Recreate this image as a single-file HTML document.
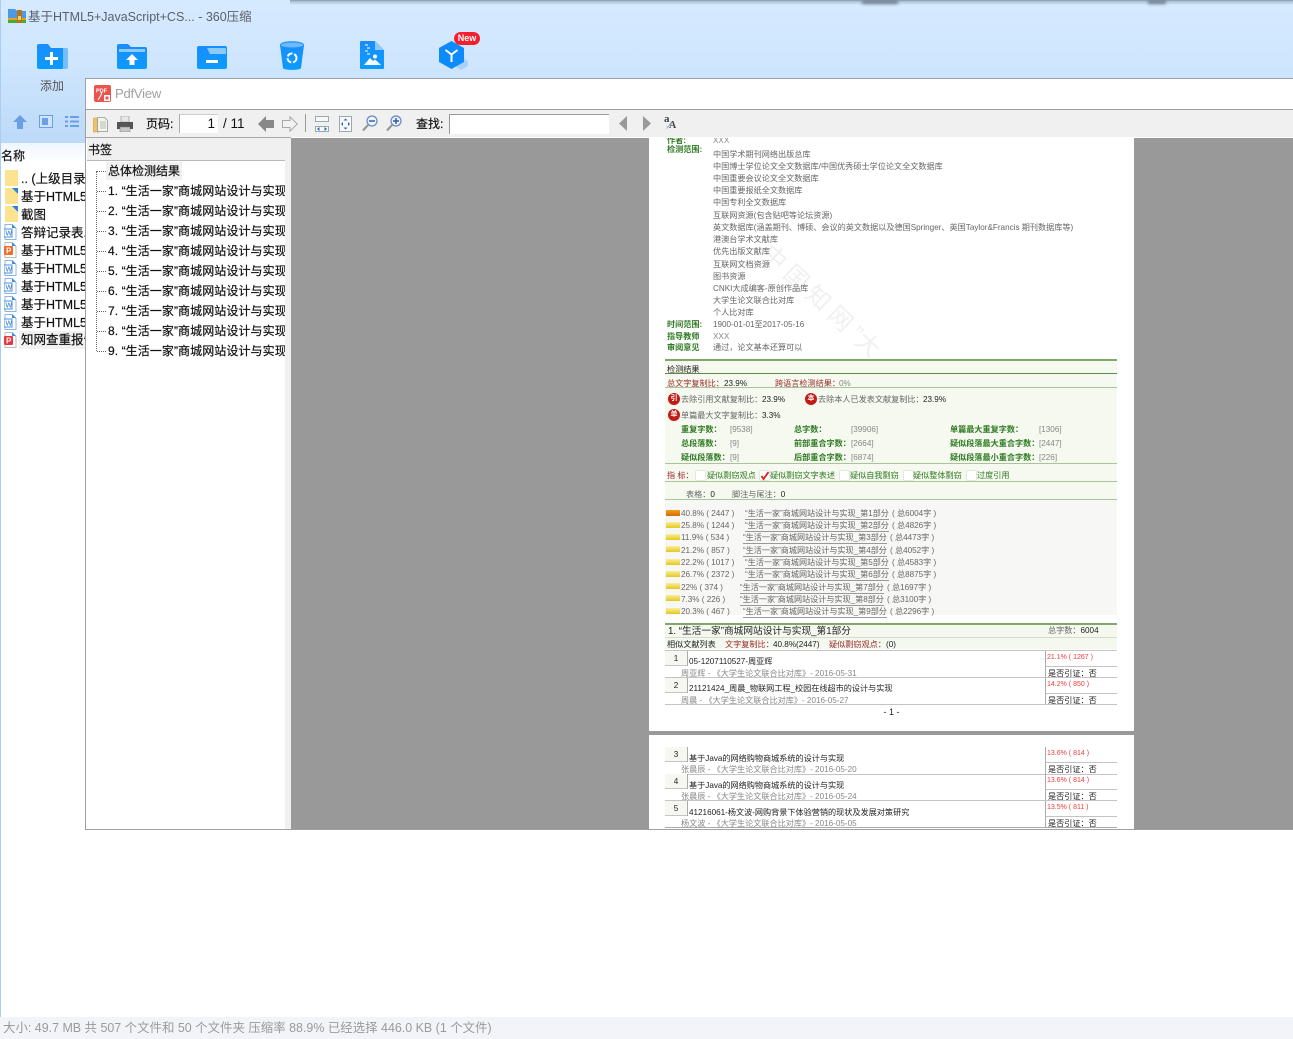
<!DOCTYPE html>
<html lang="zh"><head><meta charset="utf-8"><title>360压缩</title>
<style>
*{box-sizing:border-box}
html,body{margin:0;padding:0;width:1293px;height:1039px;overflow:hidden;background:#fff;font-family:"Liberation Sans","Noto Sans CJK SC",sans-serif}
.a{position:absolute}
.l{position:absolute;white-space:nowrap;font-size:12px;line-height:16px;color:#111;height:16px}
.s{-webkit-text-stroke:.2px}
.s .l{-webkit-text-stroke:.2px}
#page .t{position:absolute;white-space:nowrap;font-size:8.15px;line-height:10px;height:10px;color:#666;margin-top:1px}
#page .g{color:#2f7a22;font-weight:bold}
#page .r{color:#9a2a2a}
#page .k{color:#222}
#page .v{color:#888}
#page .rr{color:#f03a3a;font-size:7px}
#page .u{border-bottom:1px solid #999;font-size:8.1px}
.hl{position:absolute;left:16px;width:452px;height:1px}
.bar{position:absolute;left:17px;width:14px;height:6px;background:linear-gradient(#f8ee9a,#e5c81e)}
.cb{position:absolute;width:11px;height:11px;background:#fff;border-radius:2px;border:1px solid #e4e8df}
.circ{position:absolute;width:12px;height:12px;border-radius:50%;background:#c21a14;color:#fff;font-size:7px;line-height:12px;text-align:center;font-weight:bold}
</style></head><body>

<!-- main window background -->
<div class="a" style="left:0;top:0;width:1293px;height:143px;background:linear-gradient(#d6eaff 0,#cfe6fe 60px,#c6e0fb 100px,#bcd9f8 143px)"></div>
<div class="a" style="left:290px;top:0;width:1003px;height:1px;background:#93a5b8"></div>
<div class="a" style="left:290px;top:1px;width:1003px;height:4px;background:linear-gradient(#a9bdd2,#d6eaff)"></div>
<div class="a" style="left:862px;top:0;width:36px;height:4px;background:#6f7f90;filter:blur(1.500px)"></div>
<div class="a" style="left:1148px;top:0;width:18px;height:4px;background:#6f7f90;filter:blur(1.500px)"></div>
<div class="a" style="left:0;top:0;width:1px;height:1017px;background:#a9cdf3"></div>

<svg class="a" style="left:8px;top:8px" width="18" height="16" viewBox="0 0 18 16"><path d="M0 1h7l2 2h9v10H0z" fill="#4a9ae8"/><rect x="0" y="10" width="18" height="2" fill="#e8a020"/><rect x="0" y="12" width="18" height="3" fill="#48a838"/><rect x="9" y="2" width="5" height="13" fill="#b8741c"/><rect x="10" y="8" width="3" height="4" fill="#f4d060"/></svg>
<div class="l" style="left:28px;top:9px;color:#5a6068;font-size:12.5px">基于HTML5+JavaScript+CS... - 360压缩</div>

<!-- toolbar icons -->
<svg class="a" style="left:37px;top:44px" width="31" height="25" viewBox="0 0 31 25"><defs><linearGradient id="b1" x1="0" y1="0" x2="0" y2="1"><stop offset="0" stop-color="#1a8dfd"/><stop offset="1" stop-color="#0a9bff"/></linearGradient></defs><path d="M26 4h3.500a1.500 1.500 0 0 1 1.500 1.500V23a2 2 0 0 1-2 2H24z" fill="#76bdfb"/><path d="M0 2a2 2 0 0 1 2-2h9l3 4h12v19a2 2 0 0 1-2 2H2a2 2 0 0 1-2-2z" fill="url(#b1)"/><path d="M13 10h3v5h5v3h-5v5h-3v-5H8v-3h5z" transform="translate(0,-2)" fill="#fff"/></svg>
<svg class="a" style="left:117px;top:44px" width="30" height="25" viewBox="0 0 30 25"><path d="M0 2a2 2 0 0 1 2-2h9l3 3h14a2 2 0 0 1 2 2v18a2 2 0 0 1-2 2H2a2 2 0 0 1-2-2z" fill="url(#b1)"/><rect x="2" y="5" width="26" height="3" fill="#8ccafc"/><path d="M15 10l6 6h-3.500v5h-5v-5H9z" fill="#fff"/></svg>
<svg class="a" style="left:197px;top:46px" width="30" height="23" viewBox="0 0 30 23"><path d="M0 2a2 2 0 0 1 2-2h26a2 2 0 0 1 2 2v19a2 2 0 0 1-2 2H2a2 2 0 0 1-2-2z" fill="url(#b1)"/><path d="M10 2h18a1 1 0 0 1 1 1v5H13z" fill="#8ccafc"/><rect x="9" y="14" width="12" height="3" fill="#fff"/></svg>
<svg class="a" style="left:280px;top:41px" width="24" height="29" viewBox="0 0 24 29"><path d="M0 4c0-5 24-5 24 0l-3 23c-.5 2.500-17.500 2.500-18 0z" fill="url(#b1)"/><ellipse cx="12" cy="4" rx="11" ry="2.500" fill="#6dbbfb"/><circle cx="12" cy="17" r="4.500" fill="none" stroke="#fff" stroke-width="2" stroke-dasharray="6 1.800"/></svg>
<svg class="a" style="left:360px;top:41px" width="24" height="28" viewBox="0 0 24 28"><path d="M0 1a1 1 0 0 1 1-1h14l9 9v18a1 1 0 0 1-1 1H1a1 1 0 0 1-1-1z" fill="url(#b1)"/><path d="M15 0l9 9h-9z" fill="#8ccafc"/><path d="M5 3h3v2H5zM7 6h3v2H7zM5 9h3v2H5zM7 12h3v2H7z" fill="#8ccafc"/><path d="M4 24l6-7 3 3 2-1.500 6 5.500z" fill="#fff"/><circle cx="15" cy="15.500" r="2" fill="#fff"/></svg>
<svg class="a" style="left:439px;top:41px" width="30" height="29" viewBox="0 0 30 29"><path d="M22 16l7 4v5l-7 4-5-3 5-4z" fill="#a8d0f8"/><path d="M12.500 0L25 7v14l-12.500 7L0 21V7z" fill="#0d8bfd"/><path d="M6.500 9l6 4.500 6-4.500M12.500 13.500V21" fill="none" stroke="#fff" stroke-width="2"/></svg>
<div class="a" style="left:454px;top:32px;width:26px;height:13px;border-radius:7px;background:#f4202e;color:#fff;font-size:9px;line-height:13px;text-align:center;font-weight:bold">New</div>
<div class="l" style="left:40px;top:78px;color:#555">添加</div>

<svg class="a" style="left:13px;top:115px" width="14" height="14" viewBox="0 0 14 14"><path d="M7 0l7 7H10v7H4V7H0z" fill="#6a9fe8"/></svg>
<svg class="a" style="left:39px;top:115px" width="14" height="13" viewBox="0 0 14 13"><rect x=".5" y=".5" width="13" height="12" fill="#cfe3fa" stroke="#6a9fe8"/><rect x="3" y="3" width="6" height="7" fill="#6a9fe8"/></svg>
<svg class="a" style="left:65px;top:115px" width="14" height="13" viewBox="0 0 14 13"><path d="M0 1h3v2H0zM5 1h9v2H5zM0 5.500h3v2H0zM5 5.500h9v2H5zM0 10h3v2H0zM5 10h9v2H5z" fill="#6a9fe8"/></svg>

<!-- file list -->
<div class="a" style="left:1px;top:143px;width:84px;height:20px;background:linear-gradient(#eef6fe,#fff)"></div>
<div class="a" style="left:1px;top:163px;width:84px;height:854px;background:#fff"></div>
<div class="l s" style="left:1px;top:148px">名称</div>
<div class="a" style="left:19px;top:331px;width:66px;height:18px;background:#f1f1f1"></div>

<svg class="a" style="left:5px;top:170px" width="13" height="16"><rect width="13" height="16" fill="#fbe38f"/></svg>
<svg class="a" style="left:5px;top:188px" width="13" height="16"><rect width="13" height="16" fill="#fbe38f"/><path d="M7 0h6v6z" fill="#2a86d8"/></svg>
<svg class="a" style="left:5px;top:206px" width="13" height="16"><rect width="13" height="16" fill="#fbe38f"/><path d="M7 0h6v6z" fill="#2a86d8"/></svg>
<svg class="a" style="left:4px;top:224px" width="13" height="16"><path d="M1 .5h7l4 4v11H1z" fill="#fff" stroke="#8cb4e8"/><path d="M8 0l4 4H8z" fill="#3a8ee0"/><rect x="0" y="5" width="8" height="8" fill="#fff" stroke="#4a8fdc"/><text x="1.500" y="11.500" font-size="7" fill="#2a70c8" font-family="Liberation Sans">W</text></svg>
<svg class="a" style="left:4px;top:242px" width="13" height="16"><path d="M1 .5h7l4 4v11H1z" fill="#fff" stroke="#bbb"/><path d="M8 0l4 4H8z" fill="#3a8ee0"/><rect x="0" y="4" width="9" height="9" rx="1" fill="#f06a2a"/><text x="2" y="11.500" font-size="8" font-weight="bold" fill="#fff" font-family="Liberation Sans">P</text></svg>
<svg class="a" style="left:4px;top:260px" width="13" height="16"><path d="M1 .5h7l4 4v11H1z" fill="#fff" stroke="#8cb4e8"/><path d="M8 0l4 4H8z" fill="#3a8ee0"/><rect x="0" y="5" width="8" height="8" fill="#fff" stroke="#4a8fdc"/><text x="1.500" y="11.500" font-size="7" fill="#2a70c8" font-family="Liberation Sans">W</text></svg>
<svg class="a" style="left:4px;top:278px" width="13" height="16"><path d="M1 .5h7l4 4v11H1z" fill="#fff" stroke="#8cb4e8"/><path d="M8 0l4 4H8z" fill="#3a8ee0"/><rect x="0" y="5" width="8" height="8" fill="#fff" stroke="#4a8fdc"/><text x="1.500" y="11.500" font-size="7" fill="#2a70c8" font-family="Liberation Sans">W</text></svg>
<svg class="a" style="left:4px;top:296px" width="13" height="16"><path d="M1 .5h7l4 4v11H1z" fill="#fff" stroke="#8cb4e8"/><path d="M8 0l4 4H8z" fill="#3a8ee0"/><rect x="0" y="5" width="8" height="8" fill="#fff" stroke="#4a8fdc"/><text x="1.500" y="11.500" font-size="7" fill="#2a70c8" font-family="Liberation Sans">W</text></svg>
<svg class="a" style="left:4px;top:314px" width="13" height="16"><path d="M1 .5h7l4 4v11H1z" fill="#fff" stroke="#8cb4e8"/><path d="M8 0l4 4H8z" fill="#3a8ee0"/><rect x="0" y="5" width="8" height="8" fill="#fff" stroke="#4a8fdc"/><text x="1.500" y="11.500" font-size="7" fill="#2a70c8" font-family="Liberation Sans">W</text></svg>
<svg class="a" style="left:4px;top:332px" width="13" height="16"><path d="M1 .5h7l4 4v11H1z" fill="#fff" stroke="#bbb"/><path d="M8 0l4 4H8z" fill="#3a8ee0"/><rect x="0" y="4" width="9" height="9" rx="1" fill="#e8383f"/><text x="2" y="11.500" font-size="8" font-weight="bold" fill="#fff" font-family="Liberation Sans">P</text></svg>

<div class="a s" style="left:21px;top:171px;width:64px;height:180px;overflow:hidden">
<div class="l" style="left:0;top:0;font-size:12.500px">.. (上级目录)</div>
<div class="l" style="left:0;top:18px;font-size:12.500px">基于HTML5+JavaScript</div>
<div class="l" style="left:0;top:36px;font-size:12.500px">截图</div>
<div class="l" style="left:0;top:54px;font-size:12.500px">答辩记录表.doc</div>
<div class="l" style="left:0;top:72px;font-size:12.500px">基于HTML5+JavaScript</div>
<div class="l" style="left:0;top:90px;font-size:12.500px">基于HTML5+JavaScript</div>
<div class="l" style="left:0;top:108px;font-size:12.500px">基于HTML5+JavaScript</div>
<div class="l" style="left:0;top:126px;font-size:12.500px">基于HTML5+JavaScript</div>
<div class="l" style="left:0;top:144px;font-size:12.500px">基于HTML5+JavaScript</div>
<div class="l" style="left:0;top:161px;font-size:12.500px">知网查重报告.pdf</div>
</div>

<!-- PdfView window -->
<div class="a" style="left:85px;top:78px;width:1208px;height:752px;background:#fff;border:1px solid #a0a0a0;border-right:0"></div>
<svg class="a" style="left:94px;top:85px" width="17" height="17" viewBox="0 0 17 17"><rect width="17" height="17" rx="2" fill="#e9554e"/><text x="2" y="7.500" font-size="5.500" fill="#fff" font-weight="bold" font-family="Liberation Sans">PDF</text><path d="M4 15l3-5 1-3" stroke="#fff" fill="none"/><rect x="10" y="10" width="6" height="6" fill="#fff"/><rect x="11.500" y="11.500" width="3" height="3" fill="#e9554e"/></svg>
<div class="l" style="left:115px;top:86px;font-size:13px;color:#a0a0a0;letter-spacing:-.2px">PdfView</div>
<div class="a" style="left:86px;top:109px;width:1207px;height:1px;background:#a0a0a0"></div>
<div class="a" style="left:86px;top:110px;width:1207px;height:27px;background:#f0f0f0"></div>
<div class="a" style="left:86px;top:137px;width:205px;height:1px;background:#a8a8a8"></div>

<!-- pdf toolbar -->
<svg class="a" style="left:93px;top:116px" width="15" height="17" viewBox="0 0 15 17"><path d="M0 2h5l1 1v13H0z" fill="#eec26a" stroke="#c89a3c" stroke-width=".6"/><path d="M4.500 1.500h7l3 3v11h-10z" fill="#f4f4ee" stroke="#8a9a8a" stroke-width=".8"/><path d="M7 6h6M7 8h6M7 10h6M7 12h6" stroke="#a0aca0" stroke-width=".8"/></svg>
<svg class="a" style="left:117px;top:116px" width="16" height="16" viewBox="0 0 16 16"><rect x="4" y="0" width="8" height="6" fill="#e8e8e8" stroke="#999" stroke-width=".7"/><rect x="0" y="6" width="16" height="7" fill="#555"/><rect x="3" y="11" width="10" height="5" fill="#c8c8c8" stroke="#777" stroke-width=".5"/></svg>
<div class="l s" style="left:146px;top:116px">页码:</div>
<div class="a" style="left:179px;top:114px;width:39px;height:19px;background:#fff;border-left:1px solid #aaa;border-top:1px solid #ccc"></div>
<div class="l" style="left:179px;top:116px;width:36px;text-align:right;font-size:13.500px">1</div>
<div class="l" style="left:223px;top:116px;font-size:13.500px">/ 11</div>
<svg class="a" style="left:258px;top:116px" width="16" height="16" viewBox="0 0 16 16"><path d="M8 0v4h8v8H8v4L0 8z" fill="#888"/></svg>
<svg class="a" style="left:282px;top:116px" width="16" height="16" viewBox="0 0 16 16"><path d="M8 .8v3.700H.5v7H8v3.700L15.200 8z" fill="#f2f2f2" stroke="#a8a8a8"/></svg>
<div class="a" style="left:305px;top:114px;width:1px;height:18px;background:#9a9a9a"></div>
<svg class="a" style="left:315px;top:116px" width="14" height="16" viewBox="0 0 14 16"><rect x=".5" y=".5" width="13" height="5" fill="#f8f8f8" stroke="#9aa"/><rect x=".5" y="10.500" width="13" height="5" fill="#f8f8f8" stroke="#9aa"/><path d="M2 13l2.500-2v4zM12 13l-2.500-2v4z" fill="#2a66c8"/></svg>
<svg class="a" style="left:339px;top:116px" width="13" height="16" viewBox="0 0 13 16"><rect x=".5" y=".5" width="12" height="15" fill="#f8f8f8" stroke="#9aa"/><path d="M6.500 2.500l2 2h-4zM6.500 13.500l2-2h-4zM2 8l2-2v4zM11 8L9 6v4z" fill="#2a66c8"/></svg>
<svg class="a" style="left:362px;top:115px" width="16" height="17" viewBox="0 0 16 17"><path d="M6 10l-5 5.500" stroke="#999" stroke-width="2.200"/><circle cx="10" cy="6" r="5" fill="#eaf2fc" stroke="#6a88b8" stroke-width="1.200"/><path d="M7 6h6" stroke="#2a56a8" stroke-width="1.400"/></svg>
<svg class="a" style="left:386px;top:115px" width="16" height="17" viewBox="0 0 16 17"><path d="M6 10l-5 5.500" stroke="#999" stroke-width="2.200"/><circle cx="10" cy="6" r="5" fill="#eaf2fc" stroke="#6a88b8" stroke-width="1.200"/><path d="M7 6h6M10 3v6" stroke="#2a56a8" stroke-width="1.400"/></svg>
<div class="l s" style="left:416px;top:116px">查找:</div>
<div class="a" style="left:449px;top:114px;width:160px;height:20px;background:#fff;border-left:1px solid #999;border-top:1px solid #999"></div>
<svg class="a" style="left:619px;top:116px" width="8" height="15"><path d="M8 0v15L0 7.500z" fill="#999"/></svg>
<svg class="a" style="left:643px;top:116px" width="8" height="15"><path d="M0 0v15l8-7.500z" fill="#999"/></svg>
<div class="a" style="left:664px;top:113px;font-family:'Liberation Serif',serif;font-size:11px;font-weight:bold;color:#444;line-height:12px">a</div>
<div class="a" style="left:669px;top:120px;font-family:'Liberation Serif',serif;font-size:10px;font-weight:bold;color:#444;line-height:12px">A</div>
<div class="a" style="left:665px;top:125px;width:8px;height:1px;background:#8aa8c8;transform:rotate(-50deg)"></div>

<!-- bookmarks -->
<div class="a" style="left:87px;top:138px;width:204px;height:691px;background:#f0f0f0"></div>
<div class="l s" style="left:88px;top:142px">书签</div>
<div class="a" style="left:87px;top:160px;width:198px;height:1px;background:#b8b8b8"></div>
<div class="a" style="left:87px;top:161px;width:198px;height:668px;background:#fff"></div>
<div class="a" style="left:106px;top:162px;width:76px;height:18px;background:#f0f0f0"></div>
<div class="a" style="left:96px;top:171px;width:1px;height:180px;border-left:1px dotted #666"></div>
<div class="a" style="left:97px;top:171px;width:9px;border-top:1px dotted #666"></div>
<div class="a" style="left:97px;top:191px;width:9px;border-top:1px dotted #666"></div>
<div class="a" style="left:97px;top:211px;width:9px;border-top:1px dotted #666"></div>
<div class="a" style="left:97px;top:231px;width:9px;border-top:1px dotted #666"></div>
<div class="a" style="left:97px;top:251px;width:9px;border-top:1px dotted #666"></div>
<div class="a" style="left:97px;top:271px;width:9px;border-top:1px dotted #666"></div>
<div class="a" style="left:97px;top:291px;width:9px;border-top:1px dotted #666"></div>
<div class="a" style="left:97px;top:311px;width:9px;border-top:1px dotted #666"></div>
<div class="a" style="left:97px;top:331px;width:9px;border-top:1px dotted #666"></div>
<div class="a" style="left:97px;top:351px;width:9px;border-top:1px dotted #666"></div>
<div class="a s" style="left:108px;top:162px;width:177px;height:200px;overflow:hidden">
<div class="l" style="left:0;top:1px">总体检测结果</div>
<div class="l" style="left:0;top:21px;letter-spacing:.08px">1. “生活一家”商城网站设计与实现_第1部分</div>
<div class="l" style="left:0;top:41px;letter-spacing:.08px">2. “生活一家”商城网站设计与实现_第2部分</div>
<div class="l" style="left:0;top:61px;letter-spacing:.08px">3. “生活一家”商城网站设计与实现_第3部分</div>
<div class="l" style="left:0;top:81px;letter-spacing:.08px">4. “生活一家”商城网站设计与实现_第4部分</div>
<div class="l" style="left:0;top:101px;letter-spacing:.08px">5. “生活一家”商城网站设计与实现_第5部分</div>
<div class="l" style="left:0;top:121px;letter-spacing:.08px">6. “生活一家”商城网站设计与实现_第6部分</div>
<div class="l" style="left:0;top:141px;letter-spacing:.08px">7. “生活一家”商城网站设计与实现_第7部分</div>
<div class="l" style="left:0;top:161px;letter-spacing:.08px">8. “生活一家”商城网站设计与实现_第8部分</div>
<div class="l" style="left:0;top:181px;letter-spacing:.08px">9. “生活一家”商城网站设计与实现_第9部分</div>
</div>

<!-- viewer -->
<div class="a" style="left:291px;top:138px;width:1002px;height:691px;background:#999"></div>
<div id="page" class="a" style="left:649px;top:138px;width:485px;height:691px;overflow:hidden;background:#fff;filter:blur(.3px)">
<div class="a" style="left:0;top:593px;width:485px;height:4px;background:#999"></div>

<div class="a" style="left:16px;top:222px;width:452px;height:140px;background:#f5f9f0"></div>
<div class="a" style="left:16px;top:362px;width:452px;height:115px;background:#f7f8f5"></div>
<div class="a" style="left:16px;top:486px;width:452px;height:25px;background:#f4f8ef"></div>

<div class="a" style="font-size:24px;line-height:30px;color:#f0f0f0;white-space:nowrap;letter-spacing:6px;transform:rotate(43deg);transform-origin:0 0;left:126px;top:101px">中国知网<span style="letter-spacing:0">”</span>大</div>

<div class="t g" style="left:18px;top:-3px">作者:</div><div class="t v" style="left:64px;top:-3px">XXX</div>
<div class="t g" style="left:18px;top:6px">检测范围:</div>
<div class="t" style="left:64px;top:11px">中国学术期刊网络出版总库</div>
<div class="t" style="left:64px;top:23px">中国博士学位论文全文数据库/中国优秀硕士学位论文全文数据库</div>
<div class="t" style="left:64px;top:35px">中国重要会议论文全文数据库</div>
<div class="t" style="left:64px;top:47px">中国重要报纸全文数据库</div>
<div class="t" style="left:64px;top:59px">中国专利全文数据库</div>
<div class="t" style="left:64px;top:72px">互联网资源(包含贴吧等论坛资源)</div>
<div class="t" style="left:64px;top:84px">英文数据库(涵盖期刊、博硕、会议的英文数据以及德国Springer、英国Taylor&amp;Francis 期刊数据库等)</div>
<div class="t" style="left:64px;top:96px">港澳台学术文献库</div>
<div class="t" style="left:64px;top:108px">优先出版文献库</div>
<div class="t" style="left:64px;top:121px">互联网文档资源</div>
<div class="t" style="left:64px;top:133px">图书资源</div>
<div class="t" style="left:64px;top:145px">CNKI大成编客-原创作品库</div>
<div class="t" style="left:64px;top:157px">大学生论文联合比对库</div>
<div class="t" style="left:64px;top:169px">个人比对库</div>
<div class="t g" style="left:18px;top:181px">时间范围:</div><div class="t" style="left:64px;top:181px">1900-01-01至2017-05-16</div>
<div class="t g" style="left:18px;top:193px">指导教师</div><div class="t v" style="left:64px;top:193px">XXX</div>
<div class="t g" style="left:18px;top:204px">审阅意见</div><div class="t" style="left:64px;top:204px">通过，论文基本还算可以</div>

<div class="hl" style="top:221px;height:2px;background:#7fa86a"></div>
<div class="t k" style="left:18px;top:226px">检测结果</div>
<div class="hl" style="top:235px;background:#5d8a4a"></div>
<div class="t r" style="left:18px;top:240px">总文字复制比：</div><div class="t k" style="left:75px;top:240px">23.9%</div>
<div class="t r" style="left:126px;top:240px">跨语言检测结果：</div><div class="t v" style="left:190px;top:240px">0%</div>
<div class="hl" style="top:249px;background:#a8c498"></div>

<div class="circ" style="left:19px;top:255px">引</div><div class="t" style="left:32px;top:256px">去除引用文献复制比：</div><div class="t k" style="left:113px;top:256px">23.9%</div>
<div class="circ" style="left:156px;top:255px">本</div><div class="t" style="left:169px;top:256px">去除本人已发表文献复制比：</div><div class="t k" style="left:274px;top:256px">23.9%</div>
<div class="circ" style="left:19px;top:271px">单</div><div class="t" style="left:32px;top:272px">单篇最大文字复制比：</div><div class="t k" style="left:113px;top:272px">3.3%</div>

<div class="t g" style="left:32px;top:286px">重复字数：</div><div class="t v" style="left:81px;top:286px">[9538]</div>
<div class="t g" style="left:145px;top:286px">总字数：</div><div class="t v" style="left:202px;top:286px">[39906]</div>
<div class="t g" style="left:301px;top:286px">单篇最大重复字数：</div><div class="t v" style="left:390px;top:286px">[1306]</div>
<div class="t g" style="left:32px;top:300px">总段落数：</div><div class="t v" style="left:81px;top:300px">[9]</div>
<div class="t g" style="left:145px;top:300px">前部重合字数：</div><div class="t v" style="left:202px;top:300px">[2664]</div>
<div class="t g" style="left:301px;top:300px">疑似段落最大重合字数：</div><div class="t v" style="left:390px;top:300px">[2447]</div>
<div class="t g" style="left:32px;top:314px">疑似段落数：</div><div class="t v" style="left:81px;top:314px">[9]</div>
<div class="t g" style="left:145px;top:314px">后部重合字数：</div><div class="t v" style="left:202px;top:314px">[6874]</div>
<div class="t g" style="left:301px;top:314px">疑似段落最小重合字数：</div><div class="t v" style="left:390px;top:314px">[226]</div>
<div class="hl" style="top:325px;background:#a8c498"></div>

<div class="t r" style="left:18px;top:332px">指 标：</div>
<div class="cb" style="left:46px;top:332px"></div><div class="t g" style="left:58px;top:332px;font-weight:normal">疑似剽窃观点</div>
<div class="cb" style="left:110px;top:332px"></div><svg class="a" style="left:111px;top:333px" width="10" height="10" viewBox="0 0 10 10"><path d="M1.500 5l2 3 5-7" fill="none" stroke="#e02020" stroke-width="1.800"/></svg><div class="t g" style="left:121px;top:332px;font-weight:normal">疑似剽窃文字表述</div>
<div class="cb" style="left:190px;top:332px"></div><div class="t g" style="left:201px;top:332px;font-weight:normal">疑似自我剽窃</div>
<div class="cb" style="left:254px;top:332px"></div><div class="t g" style="left:264px;top:332px;font-weight:normal">疑似整体剽窃</div>
<div class="cb" style="left:317px;top:332px"></div><div class="t g" style="left:328px;top:332px;font-weight:normal">过度引用</div>
<div class="hl" style="top:343px;background:#a8c498"></div>
<div class="t" style="left:37px;top:351px">表格：<span style="color:#222">0</span></div>
<div class="t" style="left:83px;top:351px">脚注与尾注：<span style="color:#222">0</span></div>
<div class="hl" style="top:361px;background:#a8c498"></div>

<div class="bar" style="top:372px;background:linear-gradient(#f0a020,#d86a00)"></div>
<div class="t" style="left:32px;top:370px">40.8% ( 2447 )</div><div class="t u" style="left:96px;top:370px;height:11px">“生活一家”商城网站设计与实现_第1部分</div><div class="t" style="left:243px;top:370px">( 总6004字 )</div>
<div class="bar" style="top:384px"></div>
<div class="t" style="left:32px;top:382px">25.8% ( 1244 )</div><div class="t u" style="left:96px;top:382px;height:11px">“生活一家”商城网站设计与实现_第2部分</div><div class="t" style="left:243px;top:382px">( 总4826字 )</div>
<div class="bar" style="top:396px"></div>
<div class="t" style="left:32px;top:394px">11.9% ( 534 )</div><div class="t u" style="left:94px;top:394px;height:11px">“生活一家”商城网站设计与实现_第3部分</div><div class="t" style="left:241px;top:394px">( 总4473字 )</div>
<div class="bar" style="top:408px"></div>
<div class="t" style="left:32px;top:407px">21.2% ( 857 )</div><div class="t u" style="left:94px;top:407px;height:11px">“生活一家”商城网站设计与实现_第4部分</div><div class="t" style="left:241px;top:407px">( 总4052字 )</div>
<div class="bar" style="top:421px"></div>
<div class="t" style="left:32px;top:419px">22.2% ( 1017 )</div><div class="t u" style="left:96px;top:419px;height:11px">“生活一家”商城网站设计与实现_第5部分</div><div class="t" style="left:243px;top:419px">( 总4583字 )</div>
<div class="bar" style="top:433px"></div>
<div class="t" style="left:32px;top:431px">26.7% ( 2372 )</div><div class="t u" style="left:96px;top:431px;height:11px">“生活一家”商城网站设计与实现_第6部分</div><div class="t" style="left:243px;top:431px">( 总8875字 )</div>
<div class="bar" style="top:445px"></div>
<div class="t" style="left:32px;top:444px">22% ( 374 )</div><div class="t u" style="left:91px;top:444px;height:11px">“生活一家”商城网站设计与实现_第7部分</div><div class="t" style="left:238px;top:444px">( 总1697字 )</div>
<div class="bar" style="top:457px"></div>
<div class="t" style="left:32px;top:456px">7.3% ( 226 )</div><div class="t u" style="left:91px;top:456px;height:11px">“生活一家”商城网站设计与实现_第8部分</div><div class="t" style="left:238px;top:456px">( 总3100字 )</div>
<div class="bar" style="top:470px"></div>
<div class="t" style="left:32px;top:468px">20.3% ( 467 )</div><div class="t u" style="left:94px;top:468px;height:11px">“生活一家”商城网站设计与实现_第9部分</div><div class="t" style="left:241px;top:468px">( 总2296字 )</div>

<div class="hl" style="top:485px;height:2px;background:#7fa86a"></div>
<div class="t k" style="left:19px;top:488px;font-size:9.700px">1. “生活一家”商城网站设计与实现_第1部分</div>
<div class="t" style="left:399px;top:487px">总字数：<span style="color:#222">6004</span></div>
<div class="hl" style="top:499px;background:#d4dccc"></div>
<div class="t k" style="left:18px;top:501px">相似文献列表</div><div class="t r" style="left:76px;top:501px">文字复制比：</div><div class="t k" style="left:124px;top:501px">40.8%(2447)</div><div class="t r" style="left:180px;top:501px">疑似剽窃观点：</div><div class="t k" style="left:237px;top:501px">(0)</div>
<div class="hl" style="top:512px;background:#c4c4c4"></div>

<!-- row 1 -->
<div class="a" style="left:16px;top:513px;width:22px;height:15px;background:#f7f7f2;border-bottom:1px solid #c4c4c4"></div><div class="a" style="left:38px;top:513px;width:1px;height:15px;background:#aaa"></div>
<div class="t k" style="left:16px;top:515px;width:22px;text-align:center">1</div>
<div class="t k" style="left:40px;top:518px">05-1207110527-周亚辉</div>
<div class="t v" style="left:32px;top:530px">周亚辉 - 《大学生论文联合比对库》- 2016-05-31</div>
<div class="a" style="left:396px;top:513px;width:1px;height:27px;background:#aaa"></div>
<div class="t rr" style="left:398px;top:514px">21.1% ( 1267 )</div>
<div class="a" style="left:397px;top:528px;width:71px;height:1px;background:#c4c4c4"></div>
<div class="t k" style="left:399px;top:530px">是否引证：否</div>
<div class="hl" style="top:539px;background:#c4c4c4"></div>
<!-- row 2 -->
<div class="a" style="left:16px;top:540px;width:22px;height:15px;background:#f7f7f2;border-bottom:1px solid #c4c4c4"></div><div class="a" style="left:38px;top:540px;width:1px;height:15px;background:#aaa"></div>
<div class="t k" style="left:16px;top:542px;width:22px;text-align:center">2</div>
<div class="t k" style="left:40px;top:545px">21121424_周晨_物联网工程_校园在线超市的设计与实现</div>
<div class="t v" style="left:32px;top:557px">周晨 - 《大学生论文联合比对库》- 2016-05-27</div>
<div class="a" style="left:396px;top:540px;width:1px;height:27px;background:#aaa"></div>
<div class="t rr" style="left:398px;top:541px">14.2% ( 850 )</div>
<div class="a" style="left:397px;top:555px;width:71px;height:1px;background:#c4c4c4"></div>
<div class="t k" style="left:399px;top:557px">是否引证：否</div>
<div class="hl" style="top:566px;background:#c4c4c4"></div>
<div class="t k" style="left:200px;top:568px;width:85px;text-align:center;font-size:9px">- 1 -</div>

<!-- row 3 -->
<div class="a" style="left:16px;top:609px;width:22px;height:15px;background:#f7f7f2;border-bottom:1px solid #c4c4c4"></div><div class="a" style="left:38px;top:609px;width:1px;height:15px;background:#aaa"></div>
<div class="t k" style="left:16px;top:611px;width:22px;text-align:center">3</div>
<div class="t k" style="left:40px;top:615px">基于Java的网络购物商城系统的设计与实现</div>
<div class="t v" style="left:32px;top:626px">张晨辰 - 《大学生论文联合比对库》- 2016-05-20</div>
<div class="a" style="left:396px;top:609px;width:1px;height:27px;background:#aaa"></div>
<div class="t rr" style="left:398px;top:610px">13.6% ( 814 )</div>
<div class="a" style="left:397px;top:624px;width:71px;height:1px;background:#c4c4c4"></div>
<div class="t k" style="left:399px;top:626px">是否引证：否</div>
<div class="hl" style="top:636px;background:#c4c4c4"></div>
<!-- row 4 -->
<div class="a" style="left:16px;top:636px;width:22px;height:15px;background:#f7f7f2;border-bottom:1px solid #c4c4c4"></div><div class="a" style="left:38px;top:636px;width:1px;height:15px;background:#aaa"></div>
<div class="t k" style="left:16px;top:638px;width:22px;text-align:center">4</div>
<div class="t k" style="left:40px;top:642px">基于Java的网络购物商城系统的设计与实现</div>
<div class="t v" style="left:32px;top:653px">张晨辰 - 《大学生论文联合比对库》- 2016-05-24</div>
<div class="a" style="left:396px;top:636px;width:1px;height:27px;background:#aaa"></div>
<div class="t rr" style="left:398px;top:637px">13.6% ( 814 )</div>
<div class="a" style="left:397px;top:651px;width:71px;height:1px;background:#c4c4c4"></div>
<div class="t k" style="left:399px;top:653px">是否引证：否</div>
<div class="hl" style="top:662px;background:#c4c4c4"></div>
<!-- row 5 -->
<div class="a" style="left:16px;top:663px;width:22px;height:15px;background:#f7f7f2;border-bottom:1px solid #c4c4c4"></div><div class="a" style="left:38px;top:663px;width:1px;height:15px;background:#aaa"></div>
<div class="t k" style="left:16px;top:665px;width:22px;text-align:center">5</div>
<div class="t k" style="left:40px;top:669px">41216061-杨文波-网购背景下体验营销的现状及发展对策研究</div>
<div class="t v" style="left:32px;top:680px">杨文波 - 《大学生论文联合比对库》- 2016-05-05</div>
<div class="a" style="left:396px;top:663px;width:1px;height:27px;background:#aaa"></div>
<div class="t rr" style="left:398px;top:664px">13.5% ( 811 )</div>
<div class="a" style="left:397px;top:678px;width:71px;height:1px;background:#c4c4c4"></div>
<div class="t k" style="left:399px;top:680px">是否引证：否</div>
<div class="hl" style="top:689px;background:#aaa"></div>
</div>

<!-- status bar -->
<div class="a" style="left:0;top:1017px;width:1293px;height:22px;background:#f2f4f9"></div>
<div class="l" style="left:3px;top:1020px;color:#9a9a9a;font-size:12.450px">大小: 49.7 MB 共 507 个文件和 50 个文件夹 压缩率 88.9% 已经选择 446.0 KB (1 个文件)</div>
</body></html>
